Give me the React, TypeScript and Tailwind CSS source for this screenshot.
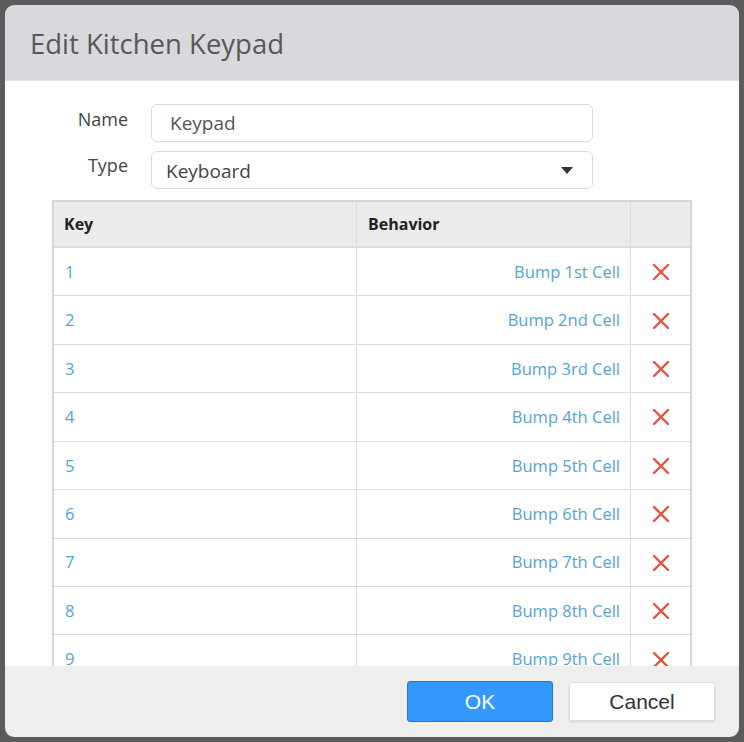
const rows = [
  { key: '1', behavior: 'Bump 1st Cell' },
  { key: '2', behavior: 'Bump 2nd Cell' },
  { key: '3', behavior: 'Bump 3rd Cell' },
  { key: '4', behavior: 'Bump 4th Cell' },
  { key: '5', behavior: 'Bump 5th Cell' },
  { key: '6', behavior: 'Bump 6th Cell' },
  { key: '7', behavior: 'Bump 7th Cell' },
  { key: '8', behavior: 'Bump 8th Cell' },
  { key: '9', behavior: 'Bump 9th Cell' },
  { key: '10', behavior: 'Bump 10th Cell' },
]

function RemoveIcon() {
  return (
    <svg width="18" height="18" viewBox="0 0 18 18" fill="none">
      <path d="M2 2 L16 16 M16 2 L2 16" stroke="#e5533d" strokeWidth="2.4" strokeLinecap="round" />
    </svg>
  )
}

export default function App() {
  return (
    <div className="w-[744px] h-[742px] bg-[#5b5b5b] p-[5px] font-['Open_Sans',sans-serif]">
      <div className="h-full flex flex-col rounded-[9px] overflow-hidden">
        <div className="h-[76px] shrink-0 bg-[#d9d9dd] flex items-center pl-[25px] border-b border-[#e2e2e4]">
          <h1 className="text-[27.5px] text-[#585858] pt-[2px]">Edit Kitchen Keypad</h1>
        </div>

        <div className="flex-1 overflow-hidden bg-white pt-[23px] px-[47px]">
          <div className="flex flex-col gap-[9px]">
            <div className="flex items-center">
              <label className="w-[76px] -ml-[47px] text-right text-[18px] text-[#444] leading-none pl-[47px] box-content -mt-[8px]">
                Name
              </label>
              <div className="ml-[23px] w-[442px] h-[38px] rounded-[6px] border border-[#dadada] flex items-center pl-[18px] text-[19px] text-[#555] shadow-[0_1px_1px_rgba(0,0,0,0.04)]">
                Keypad
              </div>
            </div>
            <div className="flex items-center">
              <label className="w-[76px] -ml-[47px] text-right text-[18px] text-[#444] leading-none pl-[47px] box-content -mt-[10px]">
                Type
              </label>
              <div className="ml-[23px] w-[442px] h-[38px] rounded-[6px] border border-[#dadada] flex items-center justify-between pl-[14px] pr-[19px] text-[19px] text-[#444]">
                <span className="pt-[3px]">Keyboard</span>
                <svg width="12" height="7" viewBox="0 0 12 7">
                  <path d="M0 0 H12 L6 7 Z" fill="#333" />
                </svg>
              </div>
            </div>
          </div>

          <div className="mt-[11px] w-[640px] border-l-2 border-r-2 border-t-2 border-[#d6d6d6]">
            <div className="grid grid-cols-[303px_274px_61px] h-[46px] bg-[#ebebeb] border-b-2 border-[#dcdcdc] text-[16px] font-bold text-[#222]">
              <div className="flex items-center pl-[10px] border-r border-[#dcdcdc]">Key</div>
              <div className="flex items-center pl-[11px] border-r border-[#dcdcdc]">Behavior</div>
              <div />
            </div>
            {rows.map((r) => (
              <div key={r.key} className="grid grid-cols-[303px_274px_61px] h-[48.43px] border-b border-[#dcdcdc] text-[16.5px] text-[#54a4d2]">
                <div className="flex items-center pl-[11px] border-r border-[#dcdcdc] pt-[1px]">{r.key}</div>
                <div className="flex items-center justify-end pr-[10px] border-r border-[#dcdcdc] pt-[1px]">{r.behavior}</div>
                <div className="flex items-center justify-center pr-[1px] pt-[1px]">
                  <RemoveIcon />
                </div>
              </div>
            ))}
          </div>
        </div>

        <div className="h-[71px] shrink-0 bg-[#eeeeee] flex items-center justify-end gap-[16px] pr-[24px] font-['Liberation_Sans',Arial,sans-serif]">
          <button className="w-[146px] h-[41px] rounded-[3px] bg-[#3399ff] border border-[#2b78c8] text-white text-[21px]">
            OK
          </button>
          <button className="w-[146px] h-[39px] rounded-[2px] bg-white border border-[#dedede] text-[#333] text-[21px] shadow-[0_1px_2px_rgba(0,0,0,0.12)]">
            Cancel
          </button>
        </div>
      </div>
    </div>
  )
}
